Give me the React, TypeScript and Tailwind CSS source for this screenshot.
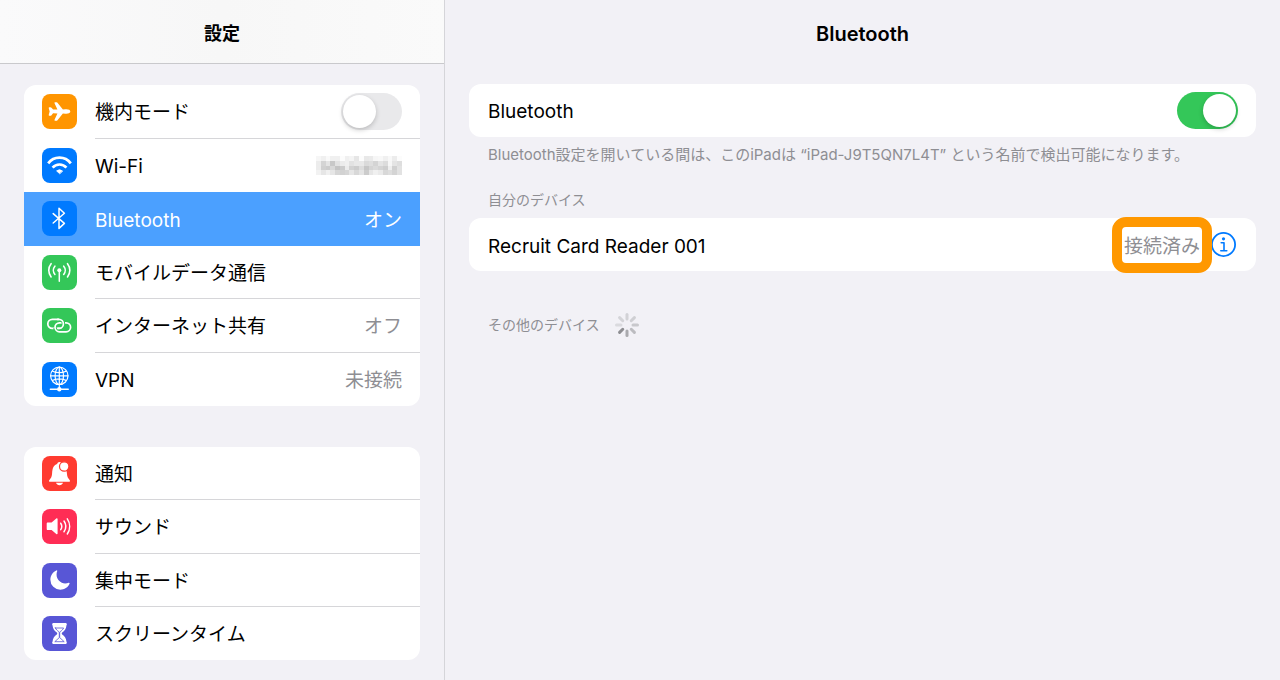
import { useId, useState, type ReactNode } from "react";
import { IoAirplane, IoMoon } from "react-icons/io5";

function Tile({ color, children }: { color: string; children: ReactNode }) {
  return (
    <span className={`flex size-[35px] shrink-0 items-center justify-center rounded-lg text-white ${color}`} aria-hidden="true">
      {children}
    </span>
  );
}

function Glyph({ children }: { children: ReactNode }) {
  return (
    <svg viewBox="0 0 35 35" className="size-full" fill="none" stroke="currentColor" strokeLinecap="round" strokeLinejoin="round">
      {children}
    </svg>
  );
}

const WifiGlyph = () => (
  <Glyph>
    <g strokeLinecap="butt" strokeWidth="2.7">
      <path d="M6.2 15.4A14 14 0 0 1 28.8 15.4" />
      <path d="M10.6 19.6A9.2 9.2 0 0 1 24.4 19.6" />
    </g>
    <path d="M17.5 25.6 14.6 22.9A4.4 4.4 0 0 1 20.4 22.9Z" fill="currentColor" strokeWidth="0.8" />
  </Glyph>
);

const BluetoothGlyph = () => (
  <Glyph>
    <path d="M11.2 12.6 22.4 22.4 17 27.4V7.2L22.4 12.2 11.2 22" strokeWidth="1.5" />
  </Glyph>
);

const CellularGlyph = () => (
  <Glyph>
    <circle cx="17.3" cy="15.3" r="2" fill="currentColor" stroke="none" />
    <path d="M17.3 16V26.3" strokeWidth="1.5" />
    <path d="M12.9 11.2a6.3 6.3 0 0 0 0 8.2M21.7 11.2a6.3 6.3 0 0 1 0 8.2M9.1 8.7a10.5 10.5 0 0 0 0 13.2M25.5 8.7a10.5 10.5 0 0 1 0 13.2" strokeWidth="1.6" />
  </Glyph>
);

const HotspotGlyph = () => (
  <Glyph>
    <rect x="5.8" y="11.4" width="15.6" height="9" rx="4.5" strokeWidth="1.7" />
    <rect x="13" y="14.8" width="15.6" height="9" rx="4.5" className="stroke-[#34c759]" strokeWidth="4" strokeDasharray="24 18" strokeDashoffset="-8" />
    <rect x="13" y="14.8" width="15.6" height="9" rx="4.5" strokeWidth="1.7" />
    <path d="M16.9 11.4a4.5 4.5 0 0 1 4.5 4.5 4.5 4.5 0 0 1-2.3 3.9" className="stroke-[#34c759]" strokeWidth="3.4" strokeLinecap="butt" />
    <path d="M15.6 11.4h1.3a4.5 4.5 0 0 1 0 9h-1" strokeWidth="1.7" />
  </Glyph>
);

const VpnGlyph = () => (
  <Glyph>
    <g strokeWidth="1.2">
      <circle cx="17.3" cy="13.8" r="8.7" />
      <ellipse cx="17.3" cy="13.8" rx="4.2" ry="8.7" />
      <path d="M17.3 5.1V27M8.6 13.8H26M10.6 9.2c3.8 2 9.6 2 13.4 0M10.6 18.4c3.8-2 9.6-2 13.4 0" />
    </g>
    <path d="M8.4 27.3H26.2" strokeWidth="1.6" />
    <circle cx="17.3" cy="27.3" r="2.2" fill="currentColor" stroke="none" />
  </Glyph>
);

const BellGlyph = () => (
  <Glyph>
    <path d="M8 25.7c-1 0-1.3-1-.6-1.8 1.7-2 2.5-3 2.7-6.6.3-5.3 1.6-8.3 5-9.3.3-1.3 1.2-2 2.4-2s2.1.7 2.4 2c3.4 1 4.7 4 5 9.3.2 3.6 1 4.6 2.700 6.600.7.800.4 1.800-.6 1.800Z" fill="currentColor" stroke="none" />
    <path d="M14 26.800h7c-.5 1.500-1.800 2.400-3.500 2.400S14.500 28.300 14 26.800Z" fill="currentColor" stroke="none" />
    <circle cx="22.200" cy="10.500" r="4.700" fill="currentColor" className="stroke-[#ff3b30]" strokeWidth="1.200" />
  </Glyph>
);

const SpeakerGlyph = () => (
  <Glyph>
    <path d="M5.8 13.6h3.8l4.700-4.100c.6-.5 1.300-.2 1.300.6v14.400c0 .8-.7 1.100-1.300.6l-4.700-4.100H5.800c-.7 0-1.100-.4-1.100-1.100v-5.200c0-.7.400-1.100 1.100-1.100Z" fill="currentColor" stroke="none" />
    <path d="M18.700 14.200a5.600 5.600 0 0 1 0 6.400M22 12a9.500 9.500 0 0 1 0 10.800M25.300 9.800a13.600 13.600 0 0 1 0 15.200" strokeWidth="1.5" />
  </Glyph>
);

const HourglassGlyph = () => (
  <Glyph>
    <path d="M11.500 7h12a1.300 1.300 0 0 1 1 2.200c-.4 4-2 5.700-4.300 7.300-.6.500-.6 1.500 0 2 2.300 1.600 3.900 3.300 4.300 7.300a1.300 1.300 0 0 1-1 2.200h-12a1.300 1.300 0 0 1-1-2.200c.4-4 2-5.700 4.300-7.300.6-.5.6-1.500 0-2-2.300-1.600-3.900-3.300-4.300-7.300a1.300 1.300 0 0 1 1-2.200Z" fill="currentColor" stroke="none" />
    <path d="M13.400 12h8.200c-.8 1.700-2 2.700-3.300 3.500-.4.300-.6.800-.6 1.500v4.600l4.500 4.100h-9.400l4.500-4.100V17c0-.7-.2-1.200-.6-1.500-1.300-.8-2.500-1.800-3.300-3.500Z" className="stroke-[#5856d6]" strokeWidth="0.8" />
  </Glyph>
);

// Grey levels of the obscured network name, one row of blocks per entry.
const MOSAIC = [
  [246, 240, 249, 240, 240, 252, 240, 244, 230, 252, 232, 234, 246, 248, 240, 248, 236, 252],
  [236, 212, 228, 200, 226, 236, 240, 226, 232, 232, 218, 222, 212, 228, 220, 246, 228, 222],
  [236, 208, 204, 216, 196, 204, 236, 210, 204, 220, 198, 212, 218, 212, 206, 238, 208, 226],
  [242, 230, 240, 230, 214, 210, 214, 230, 216, 228, 204, 230, 240, 234, 216, 222, 212, 226],
];

function MaskedName() {
  return (
    <svg viewBox="0 0 18 4" preserveAspectRatio="none" className="h-[19px] w-[86px]" shapeRendering="crispEdges" role="img" aria-label="Wi-Fi">
      {MOSAIC.flatMap((row, y) =>
        row.map((v, x) => <rect key={`${x}-${y}`} x={x} y={y} width="1" height="1" fill={`rgb(${v},${v},${v})`} />),
      )}
    </svg>
  );
}

function Switch({ id, defaultChecked }: { id: string; defaultChecked: boolean }) {
  const [on, setOn] = useState(defaultChecked);
  return (
    <input
      id={id}
      type="checkbox"
      role="switch"
      checked={on}
      onChange={(e) => setOn(e.target.checked)}
      className="flex h-[37px] w-[61px] shrink-0 cursor-pointer appearance-none items-center rounded-full bg-[#e9e9eb] px-0.5 before:block before:size-[33px] before:rounded-full before:bg-white before:shadow-[0_2px_5px_rgba(0,0,0,0.2)] checked:bg-[#34c759] checked:before:ml-auto"
    />
  );
}

type Item = { label: string; color: string; icon: ReactNode; value?: string; masked?: boolean; selected?: boolean; toggle?: boolean; line?: boolean };

const NETWORK: Item[] = [
  { label: "機内モード", color: "bg-[#ff9500]", icon: <IoAirplane className="size-[23px]" />, toggle: true, line: true },
  { label: "Wi-Fi", color: "bg-[#007aff]", icon: <WifiGlyph />, masked: true },
  { label: "Bluetooth", color: "bg-[#007aff]", icon: <BluetoothGlyph />, value: "オン", selected: true },
  { label: "モバイルデータ通信", color: "bg-[#34c759]", icon: <CellularGlyph />, line: true },
  { label: "インターネット共有", color: "bg-[#34c759]", icon: <HotspotGlyph />, value: "オフ", line: true },
  { label: "VPN", color: "bg-[#007aff]", icon: <VpnGlyph />, value: "未接続" },
];

const GENERAL: Item[] = [
  { label: "通知", color: "bg-[#ff3b30]", icon: <BellGlyph />, line: true },
  { label: "サウンド", color: "bg-[#ff2d55]", icon: <SpeakerGlyph />, line: true },
  { label: "集中モード", color: "bg-[#5856d6]", icon: <IoMoon className="size-[22px]" />, line: true },
  { label: "スクリーンタイム", color: "bg-[#5856d6]", icon: <HourglassGlyph /> },
];

function Row({ item }: { item: Item }) {
  const id = useId();
  const row = `flex items-center gap-[18px] pl-[18px] ${item.selected ? "bg-[#4ba0ff] text-white" : ""}`;
  const body = `flex flex-1 items-center justify-between self-stretch pr-[18px] ${item.line ? "border-b border-[#d6d6d9]" : ""}`;
  if (item.toggle) {
    return (
      <div className={row}>
        <Tile color={item.color}>{item.icon}</Tile>
        <div className={body}>
          <label htmlFor={id} className="pt-1">{item.label}</label>
          <Switch id={id} defaultChecked={false} />
        </div>
      </div>
    );
  }
  return (
    <a href="#" className={row} aria-current={item.selected ? "page" : undefined}>
      <Tile color={item.color}>{item.icon}</Tile>
      <span className={body}>
        <span className="pt-1">{item.label}</span>
        {item.masked && <MaskedName />}
        {item.value && <span className={`pt-1 ${item.selected ? "text-white" : "text-[#8e8e93]"}`}>{item.value}</span>}
      </span>
    </a>
  );
}

function Group({ items, height }: { items: Item[]; height: string }) {
  return (
    <div className={`grid auto-rows-fr overflow-hidden rounded-xl bg-white ${height}`}>
      {items.map((item) => (
        <Row key={item.label} item={item} />
      ))}
    </div>
  );
}

// Spoke colours, clockwise from the top.
const SPOKES = ["#d2d2d6", "#cfcfd3", "#c8c8cc", "#bcbcc0", "#aaaaae", "#8e8e92", "#dadade", "#d4d4d8"];

function Spinner() {
  return (
    <svg viewBox="-12 -12 24 24" className="size-6" role="img" aria-label="検索中">
      {SPOKES.map((c, i) => (
        <path key={i} d="M0-6V-10.5" stroke={c} strokeWidth="3" strokeLinecap="round" transform={`rotate(${i * 45})`} />
      ))}
    </svg>
  );
}

export default function App() {
  return (
    <div className="flex min-h-screen bg-[#f2f1f6] font-['Inter','Noto_Sans_CJK_JP',sans-serif] text-[19px] leading-7 text-black" lang="ja">
      <aside className="w-[445px] shrink-0 border-r border-[#d5d5d9]">
        <header className="flex h-16 items-center justify-center border-b border-[#c9c9cc] bg-linear-to-r from-[#fafafb] via-[#f7f7f7] to-[#fafafa] pt-1">
          <h1 className="text-lg font-bold">設定</h1>
        </header>
        <nav className="flex flex-col gap-[41px] px-6 pt-[21px] pb-5">
          <Group items={NETWORK} height="min-h-[321px]" />
          <Group items={GENERAL} height="min-h-[213px]" />
        </nav>
      </aside>

      <main className="min-w-0 flex-1 px-6">
        <header className="flex h-16 items-center justify-center pt-1">
          <h2 className="text-xl font-semibold">Bluetooth</h2>
        </header>

        <section className="mt-5 flex h-[53px] items-center justify-between rounded-xl bg-white pr-[18px] pl-[19px]">
          <label htmlFor="bluetooth" className="pt-0.5">Bluetooth</label>
          <Switch id="bluetooth" defaultChecked />
        </section>
        <p className="mt-2 px-[19px] text-[15px] leading-5 text-[#8e8e93]">
          Bluetooth設定を開いている間は、このiPadは “iPad-J9T5QN7L4T” という名前で検出可能になります。
        </p>

        <h3 className="mt-[25px] px-[19px] text-sm leading-5 text-[#8e8e93]">自分のデバイス</h3>
        <section className="mt-2 flex h-[53px] items-center justify-between rounded-xl bg-white pr-5 pl-[19px]">
          <span className="pt-1">Recruit Card Reader 001</span>
          <span className="flex items-center gap-[11px]">
            <span className="relative pt-1 text-[#8e8e93]">
              接続済み
              <span className="absolute -inset-x-3 -inset-y-3 rounded-[14px] border-10 border-[#ff9800]" />
            </span>
            <button type="button" aria-label="詳細" className="size-[25px] text-[#007aff]">
              <svg viewBox="0 0 25 25" className="size-full" fill="none" stroke="currentColor" strokeWidth="1.8" strokeLinecap="round" strokeLinejoin="round">
                <circle cx="12.5" cy="12.5" r="11.6" />
                <path d="M10.2 10.8H13V18.6M9.8 18.8H15.8" strokeWidth="1.6" />
                <circle cx="12.5" cy="6.8" r="1.6" fill="currentColor" stroke="none" />
              </svg>
            </button>
          </span>
        </section>

        <div className="mt-[42px] flex items-center gap-[15px] px-[19px]">
          <h3 className="text-sm leading-5 text-[#8e8e93]">その他のデバイス</h3>
          <Spinner />
        </div>
      </main>
    </div>
  );
}
